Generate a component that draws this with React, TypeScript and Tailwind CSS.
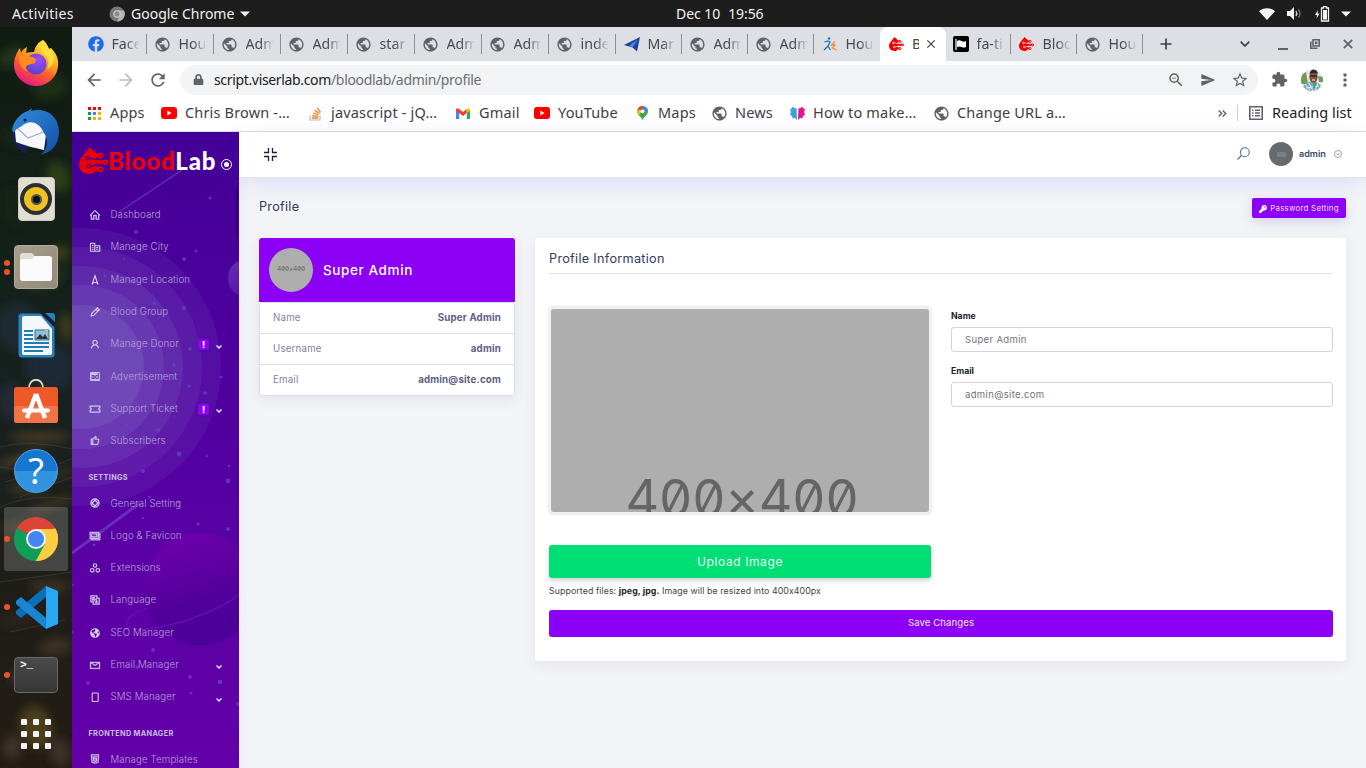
import type { ReactNode } from "react";
import { FaKey, FaFacebook, FaLock, FaGlobeAmericas } from "react-icons/fa";
import {
  MdArrowBack,
  MdArrowForward,
  MdRefresh,
  MdStarBorder,
  MdSend,
  MdMoreVert,
  MdClose,
  MdOutlineZoomOut,
  MdPublic,
  MdExtension,
} from "react-icons/md";
import {
  LiaHomeSolid,
  LiaUser,
  LiaTicketAltSolid,
  LiaThumbsUp,
  LiaLifeRing,
  LiaImages,
  LiaEnvelope,
  LiaHtml5,
  LiaLanguageSolid,
} from "react-icons/lia";

/* ---------- small drawings ---------- */

function YouTube() {
  return (
    <svg width="16" height="12" viewBox="0 0 16 12">
      <rect width="16" height="12" rx="3" fill="#f00" />
      <path d="M6.3 3.6v4.8L10.5 6z" fill="#fff" />
    </svg>
  );
}

function BloodDrop({ className, bg }: { className: string; bg: string }) {
  return (
    <svg className={className} viewBox="0 0 29 27">
      <path d="M10.500 0c1.500 2 5 4 7.500 7l-2 5v11l-1 3c-1.500.7-3 1-4.500 1C4.500 27 0 23 0 17.500 0 11 7.500 5 10.500 0z" fill="#ee0000" />
      <path d="M12 8.500h9M9 15h17M12 22.500h9M14 12l5 2M14 19l4 2" stroke="#ee0000" strokeWidth="3.600" />
      <path d="M20 12.300h-6l-1.500-1H9M19 18.600h-4l-1.500.6H11" stroke={bg} strokeWidth="1.300" fill="none" />
      <g fill={bg} stroke="#ee0000" strokeWidth="1.900">
        <circle cx="21.500" cy="8.500" r="2" />
        <circle cx="26.500" cy="15.300" r="1.800" />
        <circle cx="21.500" cy="22.300" r="2" />
      </g>
      <g fill="#ee0000" stroke={bg} strokeWidth="1.200">
        <circle cx="8.500" cy="11.300" r="1.700" />
        <circle cx="10" cy="19.200" r="1.700" />
      </g>
    </svg>
  );
}

/* ---------- desktop ---------- */

function TopPanel() {
  return (
    <header className="flex h-[27px] shrink-0 items-center bg-[#1d1d1d] pl-3 text-[14px] text-[#f2f2f2]">
      <span className="w-[97px] tracking-[0.350px]">Activities</span>
      <svg width="16" height="16" viewBox="0 0 16 16">
        <circle cx="8" cy="8" r="7.500" fill="#777" />
        <path d="M8 4.500h7A7.500 7.500 0 0 1 8 15.500l3-6z" fill="#b5b5b5" />
        <circle cx="8" cy="8" r="3.300" fill="#8a8a8a" stroke="#ddd" strokeWidth="1" />
      </svg>
      <span className="ml-[6px] w-[105px] whitespace-nowrap">Google Chrome</span>
      <svg className="ml-[4px]" width="10" height="6" viewBox="0 0 10 6">
        <path d="M0 .5h10L5 5.500z" fill="#f2f2f2" />
      </svg>
      <span className="ml-[426px] tracking-[-0.050px]">Dec 10</span>
      <span className="ml-[8px] tracking-[-0.100px]">19:56</span>
      <div className="ml-auto flex items-center pr-[15px]">
        <svg width="16" height="12" viewBox="0 0 16 12">
          <path d="M0 3.200C4.500-.8 11.500-.8 16 3.200L8 12z" fill="#f2f2f2" />
        </svg>
        <svg className="ml-[12px]" width="16" height="13" viewBox="0 0 16 13">
          <path d="M0 4h3l4-4v13L3 9H0z" fill="#f2f2f2" />
          <path d="M9 4q1.500 2.500 0 5" stroke="#ddd" strokeWidth="1.300" fill="none" />
          <path d="M11.500 2.500q3 4 0 8" stroke="#777" strokeWidth="1.300" fill="none" />
        </svg>
        <svg className="ml-[12px]" width="15" height="16" viewBox="0 0 15 16">
          <path d="M3 4L0 9h2l-.5 3.500L4.500 7.500h-2z" fill="#f2f2f2" />
          <path d="M6.500 2h2V.7h3V2h2v13h-7z" fill="none" stroke="#f2f2f2" strokeWidth="1.300" />
          <path d="M8 4h4v9.500H8z" fill="#f2f2f2" />
        </svg>
        <svg className="ml-[11px]" width="10" height="6" viewBox="0 0 10 6">
          <path d="M0 .5h10L5 5.500z" fill="#f2f2f2" />
        </svg>
      </div>
    </header>
  );
}

function DockItem({ dots = 0, active = false, children }: { dots?: number; active?: boolean; children: ReactNode }) {
  return (
    <div className="relative flex h-[68px] items-center justify-center">
      {active && <div className="absolute inset-x-1 inset-y-[2px] rounded-[3px] bg-[#ffffff2e]" />}
      {dots > 0 && (
        <div className="absolute top-0 left-1 flex h-full flex-col justify-center gap-[3px]">
          {Array.from({ length: dots }, (_, i) => (
            <div key={i} className="size-[6px] rounded-full bg-[#e95420]" />
          ))}
        </div>
      )}
      <div className="relative">{children}</div>
    </div>
  );
}

const leaves = [
  [12, 30, 16, 9, "#24351a"], [50, 60, 18, 12, "#1c2d17"], [20, 110, 20, 10, "#182817"], [58, 150, 12, 16, "#2c3d18"],
  [15, 180, 14, 20, "#152213"], [60, 226, 9, 7, "#3f4516"], [44, 250, 20, 12, "#22321f"], [18, 300, 22, 24, "#1c2a33"],
  [50, 340, 24, 24, "#1e2a34"], [14, 375, 16, 18, "#222c34"], [66, 300, 6, 14, "#40411b"], [40, 410, 30, 5, "#4b3a26"],
  [20, 432, 25, 3, "#5a4830"], [55, 447, 22, 3, "#3e3120"], [28, 462, 20, 2, "#6b553b"], [50, 478, 24, 3, "#4c3c28"],
  [18, 500, 20, 6, "#352a1c"], [50, 560, 20, 6, "#3f3122"], [20, 590, 22, 8, "#2c241b"], [55, 620, 16, 9, "#3b3023"],
  [30, 650, 20, 8, "#40342a"], [36, 700, 16, 22, "#4a3c1f"], [60, 725, 10, 14, "#3c3129"], [12, 720, 9, 12, "#40362c"],
] as const;

function Dock() {
  return (
    <aside className="relative w-[72px] shrink-0 overflow-hidden bg-linear-to-b from-[#101c11] via-[#17211f] to-[#241b14] pt-[2px]">
      <svg className="absolute inset-0" width="72" height="741" viewBox="0 0 72 741">
        <defs>
          <filter id="soft" x="-50%" y="-50%" width="200%" height="200%">
            <feGaussianBlur stdDeviation="5" />
          </filter>
        </defs>
        <g filter="url(#soft)">
          {leaves.map(([cx, cy, rx, ry, fill], i) => (
            <ellipse key={i} cx={cx} cy={cy} rx={rx} ry={ry} fill={fill} transform={`rotate(${-18 + (i % 3) * 9} ${cx} ${cy})`} />
          ))}
        </g>
        <g stroke="#7a6448" strokeOpacity=".3" fill="none">
          <path d="M0 420q30-8 72 2M0 440q35 8 72-8M5 455l50-14M20 470l52-20M0 480q30-14 72-8M0 555l72-10M10 605l55-12" />
        </g>
      </svg>
      <DockItem>
        <svg width="46" height="48" viewBox="0 0 46 48">
          <defs>
            <linearGradient id="ffBody" x1=".8" y1="0" x2=".3" y2="1">
              <stop offset="0" stopColor="#fff44f" />
              <stop offset=".35" stopColor="#ffb21f" />
              <stop offset=".65" stopColor="#ff5a2c" />
              <stop offset="1" stopColor="#e31587" />
            </linearGradient>
            <radialGradient id="ffGlobe" cx=".6" cy=".3" r=".8">
              <stop offset="0" stopColor="#a04bf5" />
              <stop offset="1" stopColor="#4b43c9" />
            </radialGradient>
          </defs>
          <path d="M30 1c3 2 5 6 6 9 1-1 2-1 2-1 5 5 8 11 7 18-1 12-11 20-22 20S1 38 1 26C1 19 4 13 7 9l1 5c1-3 4-5 6-6l-1 6c3-1 6-1 8-1 1-5 4-10 9-12z" fill="url(#ffBody)" />
          <circle cx="23" cy="25" r="10.500" fill="url(#ffGlobe)" />
          <path d="M6 18c5-3 12-1 17 2l-1 4-7 2c-3 1-3 4 0 7-6-2-9-8-9-15z" fill="#ff8b1f" />
          <path d="M30 1c-5 8-2 12 2 15s5 9 2 14c6-3 8-9 6-15-1-4-8-7-10-14z" fill="#ffdf3d" />
        </svg>
      </DockItem>
      <DockItem>
        <svg width="50" height="50" viewBox="0 0 50 50">
          <defs>
            <linearGradient id="tb" x1="0" y1="0" x2="1" y2="1">
              <stop offset="0" stopColor="#2f8fe0" />
              <stop offset="1" stopColor="#134da6" />
            </linearGradient>
          </defs>
          <path d="M2 22c-2 14 6 23 14 26l-1-6 20-2 12-20L30 5z" fill="#15205c" />
          <path d="M4 25l3-8 18-3 11 7-3 23C24 42 12 39 5 36z" fill="#f5f7fa" />
          <path d="M6 22l11 10 18-7" fill="none" stroke="#a9afb9" strokeWidth="1.200" />
          <path d="M1 24C2 15 10 7 17 5c3-2 4-3 4-3l-1 3C36 1 48 11 48 26c0 10-5 17-11 20l-7 3c7-7 8-15 3-22C28 15 18 14 12 19c-4 4-7 2-9 8z" fill="url(#tb)" />
          <circle cx="14" cy="14" r="1.500" fill="#1e1e1e" />
        </svg>
      </DockItem>
      <DockItem>
        <div className="flex h-[44px] w-[37px] items-center justify-center rounded-[4px] border border-[#cdc8bb] bg-[#e2ded2]">
          <div className="flex size-[32px] items-center justify-center rounded-full border-4 border-[#2a2f36] bg-[#f0c21e]">
            <div className="size-[11px] rounded-full border-2 border-[#50565c] bg-[#111]" />
          </div>
        </div>
      </DockItem>
      <DockItem dots={2}>
        <div className="flex size-[44px] items-center justify-center rounded-[4px] border border-[#b3aa9a] bg-linear-to-br from-[#a59d8d] to-[#948b7a]">
          <svg width="32" height="28" viewBox="0 0 32 28">
            <path d="M0 3q0-3 3-3h9l3 3.500h14q3 0 3 3V25q0 3-3 3H3q-3 0-3-3z" fill="#e1ddd6" />
            <path d="M0 9q0-3 3-3h9l3-3h14q3 0 3 3v19q0 3-3 3H3q-3 0-3-3z" fill="#fafafa" />
          </svg>
        </div>
      </DockItem>
      <DockItem>
        <svg width="37" height="45" viewBox="0 0 37 45">
          <rect x=".5" y=".5" width="36" height="44" rx="3" fill="#2684bd" />
          <path d="M22 0l15 15V8L29 0z" fill="#162130" />
          <path d="M27 0h7q3 0 3 3v6z" fill="#2684bd" />
          <path d="M4 5q0-2 2-2h17l11 13v24q0 2-2 2H6q-2 0-2-2z" fill="#f4f8fb" />
          <path d="M6 18h9M6 22h9M6 26h9M6 30h25M6 34h25M6 38h19" stroke="#1d7cb5" strokeWidth="1.800" />
          <path d="M17 17h14v10H17z" fill="#8fc0df" stroke="#1c6fa2" />
          <path d="M18 26l4-5 3 3 2-3 3 5z" fill="#333" />
          <path d="M26 17h4v3z" fill="#f3b62c" />
        </svg>
      </DockItem>
      <DockItem>
        <svg className="-mt-[4px]" width="44" height="45" viewBox="0 0 44 45">
          <path d="M15 9c0-11 14-11 14 0" fill="none" stroke="#ecd9b4" strokeWidth="1.800" />
          <rect y="8" width="44" height="36" rx="3" fill="#ee5a27" />
          <rect y="27" width="44" height="17" rx="3" fill="#f27446" />
          <path d="M22 15L13 39M22 15l9 24" stroke="#fff" strokeWidth="4.500" fill="none" />
          <path d="M10 31.500h24" stroke="#fff" strokeWidth="4" strokeLinecap="round" />
        </svg>
      </DockItem>
      <DockItem>
        <div className="flex size-[44px] items-center justify-center rounded-full border border-[#50a6e6] bg-linear-to-b from-[#1577cf] from-50% to-[#3293de] to-50% text-[36px] leading-none text-white">
          ?
        </div>
      </DockItem>
      <DockItem dots={1} active>
        <svg width="44" height="44" viewBox="0 0 44 44">
          <path d="M22 22L2.950 11A22 22 0 0 1 41.050 11z" fill="#db4437" />
          <path d="M22 22L41.050 11A22 22 0 0 1 22 44z" fill="#ffcd40" />
          <path d="M2.950 11A22 22 0 0 0 22 44l9-17-9-5z" fill="#0f9d58" />
          <path d="M22 12h19.600A22 22 0 0 1 22 44l9.500-17z" fill="#ffcd40" />
          <circle cx="22" cy="22" r="10" fill="#f1f1f1" />
          <circle cx="22" cy="22" r="8" fill="#4285f4" />
        </svg>
      </DockItem>
      <DockItem dots={1}>
        <svg width="43" height="43" viewBox="0 0 43 43">
          <path d="M31 11L6 32l-5-4v-3L31 0z" fill="#0a6fb8" />
          <path d="M31 32L6 11l-5 4v3l30 25z" fill="#1787d4" />
          <path d="M31 0l12 5v33l-12 5z" fill="#2aa7f2" />
        </svg>
      </DockItem>
      <DockItem dots={1}>
        <div className="h-[36px] w-[44px] rounded-[4px] border border-[#686868] bg-linear-to-b from-[#4a4a4a] to-[#363636] pl-[5px] font-mono text-[11px] leading-[14px] font-bold text-white">
          &gt;_
        </div>
      </DockItem>
      <div className="relative mx-auto mt-[10px] grid w-[30px] grid-cols-3 gap-[6px]">
        {Array.from({ length: 9 }, (_, i) => (
          <div key={i} className="size-[6px] rounded-[1px] bg-[#f4f4f2]" />
        ))}
      </div>
    </aside>
  );
}

/* ---------- browser ---------- */

const plane = (
  <svg width="16" height="15" viewBox="0 0 16 15">
    <path d="M0 8L16 0l-3 14.500-4.500-4z" fill="#1e3f9e" />
    <path d="M14 2.500L5 8.500l3.500 2z" fill="#4c86dd" />
  </svg>
);
const runner = (
  <svg width="14" height="14" viewBox="0 0 14 14" fill="none" strokeWidth="1.300">
    <circle cx="6" cy="1.500" r="1.300" fill="#1d78c8" />
    <path d="M1.500 5l3.500-1 2 1-2 4-4 4M5 9l2.500 4" stroke="#1d78c8" />
    <path d="M12 4.500L8.500 8H12l-2.500 3 4 2" stroke="#f28c28" />
  </svg>
);
const flag = (
  <div className="flex size-4 items-center justify-center rounded-[2px] bg-black">
    <svg width="12" height="11" viewBox="0 0 12 11">
      <path d="M1 0v11" stroke="#fff" strokeWidth="1.200" />
      <path d="M2 2q2-1.500 4.500 0t4.500 0v6q-2 1-4.500 0T2 8z" fill="#fff" />
    </svg>
  </div>
);
const drop = <BloodDrop className="h-[14px] w-[15px]" bg="#fff" />;
const globe = <MdPublic className="size-[17px] shrink-0 text-[#5f6368]" />;

type TabInfo = { icon: ReactNode; text: string; width: string; active?: boolean; bare?: boolean };

const tabs: TabInfo[] = [
  { icon: <FaFacebook className="size-4 text-[#1b6cf2]" />, text: "Face", width: "w-[67px]" },
  { icon: globe, text: "Hou", width: "w-[67px]" },
  { icon: globe, text: "Adm", width: "w-[67px]" },
  { icon: globe, text: "Adm", width: "w-[67px]" },
  { icon: globe, text: "star", width: "w-[67px]" },
  { icon: globe, text: "Adm", width: "w-[67px]" },
  { icon: globe, text: "Adm", width: "w-[67px]" },
  { icon: globe, text: "inde", width: "w-[67px]" },
  { icon: plane, text: "Mar", width: "w-[66px]" },
  { icon: globe, text: "Adm", width: "w-[66px]" },
  { icon: globe, text: "Adm", width: "w-[66px]" },
  { icon: runner, text: "Hou", width: "w-[65px]", bare: true },
  { icon: drop, text: "B", width: "w-[66px]", active: true },
  { icon: flag, text: "fa-ti", width: "w-[66px]" },
  { icon: drop, text: "Bloo", width: "w-[66px]" },
  { icon: globe, text: "Hou", width: "w-[66px]" },
];

function Tab({ icon, text, width, active, bare }: TabInfo) {
  if (active) {
    return (
      <div className={`flex items-center rounded-t-[8px] bg-white pl-[8px] ${width}`}>
        <div className="flex w-4 justify-center">{icon}</div>
        <span className="ml-[8px] w-[7px] overflow-hidden">{text}</span>
        <MdClose className="ml-[5px] size-[14px] text-[#3c4043]" />
      </div>
    );
  }
  return (
    <div className={`flex items-center pl-[6.500px] ${width}`}>
      <div className="flex w-4 shrink-0 justify-center">{icon}</div>
      <span className="ml-[8px] w-[28px] overflow-hidden mask-r-from-50% whitespace-nowrap">{text}</span>
      <div className={bare ? "hidden" : "mr-px ml-auto h-5 w-px bg-[#8b8e93]"} />
    </div>
  );
}

function TabStrip() {
  return (
    <div className="flex h-[34px] shrink-0 bg-[#dedfe4] pl-[9px] text-[14.200px] text-[#45494d]">
      {tabs.map((t, i) => (
        <Tab key={i} {...t} />
      ))}
      <div className="ml-[16px] flex grow items-center">
        <svg width="12" height="12" viewBox="0 0 13 13">
          <path d="M6.500 .5v12M.5 6.500h12" stroke="#3c4043" strokeWidth="1.800" />
        </svg>
        <svg className="ml-[68px]" width="10" height="6" viewBox="0 0 10 6">
          <path d="M.7.700L5 5 9.300.700" stroke="#3c4043" strokeWidth="1.700" fill="none" />
        </svg>
        <div className="mt-[9px] ml-[28px] h-[2px] w-[10px] bg-[#5f6368]" />
        <svg className="ml-[22px]" width="10" height="10" viewBox="0 0 10 10">
          <path d="M3 .8h6.200V7H3zM.8 2.500v6.700H7.500" stroke="#5f6368" strokeWidth="1.600" fill="none" />
          <path d="M4.800 2.600h2.600v2.600H4.800z" fill="#5f6368" />
        </svg>
        <svg className="ml-[23px]" width="10" height="10" viewBox="0 0 10 10">
          <path d="M.8.800l8.400 8.400M9.200.800L.8 9.200" stroke="#5f6368" strokeWidth="1.800" />
        </svg>
      </div>
    </div>
  );
}

function Toolbar() {
  return (
    <div className="flex h-[37px] shrink-0 items-center pl-[12px] text-[#5f6368]">
      <MdArrowBack className="size-5" />
      <MdArrowForward className="ml-[12px] size-5 text-[#babcbe]" />
      <MdRefresh className="ml-[12px] size-5" />
      <div className="ml-[12px] flex h-[30px] w-[1078px] items-center rounded-full bg-[#f1f3f4] pl-[13px]">
        <FaLock className="size-[11px]" />
        <div className="ml-[10px] text-[14px] tracking-[-0.340px]">
          <span className="text-[#202124]">script.viserlab.com</span>
          <span className="text-[#6c7075]">/bloodlab/admin/profile</span>
        </div>
        <MdOutlineZoomOut className="ml-auto size-[18px]" />
        <MdSend className="ml-[15px] size-4" />
        <MdStarBorder className="mr-[9px] ml-[15px] size-[18px]" />
      </div>
      <MdExtension className="ml-[13px] size-[17px]" />
      <svg className="ml-[13px]" width="22" height="22" viewBox="0 0 22 22">
        <defs>
          <clipPath id="me">
            <circle cx="11" cy="11" r="11" />
          </clipPath>
        </defs>
        <g clipPath="url(#me)">
          <path fill="#e6e9e4" d="M0 0h22v22H0z" />
          <path fill="#6f9a58" d="M0 6l5-3 2 12H0zM17 7l5 1v5h-4z" />
          <path fill="#7fa8bd" d="M1 22q1-9 8-9h6q5 1 6 9z" />
          <path d="M4 15l5 6M8 14l4 8M17 14l-3 8M5 19l13-2" stroke="#e8f2f6" />
          <path d="M14 14l-1 5" stroke="#30a06a" strokeWidth="2" />
          <ellipse cx="12.500" cy="8" rx="4.200" ry="6" fill="#8a5238" />
          <path d="M8.500 5q1-5 4.500-4.500T17 5q-4-2-8.500 0z" fill="#2e2a2c" />
          <path d="M9 7h7" stroke="#30262b" strokeWidth="1.500" />
          <path d="M11 11h3" stroke="#eee" />
        </g>
      </svg>
      <MdMoreVert className="ml-[12px] size-[20px]" />
    </div>
  );
}

const appColors = ["bg-[#f00]", "bg-[#f00]", "bg-[#f00]", "bg-[#0c9d58]", "bg-[#4285f4]", "bg-[#f4b400]", "bg-[#0c9d58]", "bg-[#f4b400]", "bg-[#f4b400]"];

const bookmarks: { text: string; width: string; icon: ReactNode }[] = [
  {
    text: "Apps",
    width: "w-[75px]",
    icon: (
      <div className="grid grid-cols-3 gap-[2px]">
        {appColors.map((c, i) => (
          <div key={i} className={`size-[3px] ${c}`} />
        ))}
      </div>
    ),
  },
  { text: "Chris Brown -…", width: "w-[146px]", icon: <YouTube /> },
  {
    text: "javascript - jQ…",
    width: "w-[148px]",
    icon: (
      <svg width="13" height="15" viewBox="0 0 13 15" fill="none">
        <path d="M1 9.500V14h10V9.500" stroke="#b5b7ba" strokeWidth="1.200" />
        <path d="M3 12h6M3.200 9.700l6 .6M4 7l5.700 1.700M5.500 4.200l5 3.200M8 1.700l3.700 4.600" stroke="#f48024" strokeWidth="1.300" />
      </svg>
    ),
  },
  {
    text: "Gmail",
    width: "w-[79px]",
    icon: (
      <svg width="14" height="11" viewBox="0 0 14 11">
        <path d="M0 2v9h3.200V4.500z" fill="#4285f4" />
        <path d="M14 2v9h-3.200V4.500z" fill="#34a853" />
        <path d="M0 2q0-3 3.200-1L7 4l3.800-3V5L7 8 0 3z" fill="#ea4335" />
        <path d="M10.800 1Q14-1 14 2v.8L10.800 5z" fill="#fbbc04" />
      </svg>
    ),
  },
  { text: "YouTube", width: "w-[100px]", icon: <YouTube /> },
  {
    text: "Maps",
    width: "w-[77px]",
    icon: (
      <svg width="11" height="15" viewBox="0 0 11 15">
        <path d="M5.500 15C5.500 11 0 9.500 0 5.500A5.500 5.500 0 0 1 11 5.500C11 9.500 5.500 11 5.500 15z" fill="#34a853" />
        <path d="M1 2.500A5.500 5.500 0 0 1 7.200.300L3 6z" fill="#ea4335" />
        <path d="M7.200.300A5.500 5.500 0 0 1 11 5.500L5 4z" fill="#4285f4" />
        <path d="M0 5.500q0 2 1.500 4l4-4-3-2z" fill="#fbbc04" />
        <circle cx="5.500" cy="5.300" r="1.900" fill="#fff" />
      </svg>
    ),
  },
  { text: "News", width: "w-[78px]", icon: globe },
  {
    text: "How to make…",
    width: "w-[144px]",
    icon: (
      <svg width="15" height="15" viewBox="0 0 16 15">
        <path d="M0 3l2-1 1-2 2 2 2 0 .5 12.500L5 12l-2 1-1-3-2-1 1-3z" fill="#3ba2dc" />
        <path d="M16 3l-2-1-1-2-2 2-2 0-.5 12.500L11 12l2 1 1-3 2-1-1-3z" fill="#e8158a" />
      </svg>
    ),
  },
  { text: "Change URL a…", width: "w-[132px]", icon: globe },
];

function BookmarksBar() {
  return (
    <div className="flex h-[34px] shrink-0 items-center border-b border-[#dadce0] pb-[3px] pl-[14px] text-[14.500px] tracking-[0.170px] text-[#3c4043]">
      {bookmarks.map((b, i) => (
        <div key={i} className={`flex shrink-0 items-center ${b.width}`}>
          <div className="flex w-4 shrink-0 justify-center">{b.icon}</div>
          <span className="ml-[8px] whitespace-nowrap">{b.text}</span>
        </div>
      ))}
      <div className="flex grow items-center justify-end pr-[14px]">
        <svg width="9" height="7" viewBox="0 0 9 7">
          <path d="M.7.500l3 3-3 3M4.700.500l3 3-3 3" stroke="#5f6368" strokeWidth="1.400" fill="none" />
        </svg>
        <div className="ml-[10px] h-4 w-px bg-[#c9cbcf]" />
        <svg className="ml-[11px]" width="14" height="14" viewBox="0 0 14 14">
          <path d="M.8.800h12.400v12.400H.8z" stroke="#5f6368" strokeWidth="1.600" fill="none" />
          <path d="M3 4.200h1.500M3 7h1.500M3 9.800h1.500M6 4.200h5M6 7h5M6 9.800h5" stroke="#5f6368" strokeWidth="1.500" />
        </svg>
        <span className="ml-[9px] w-[80px] tracking-[0.050px] whitespace-nowrap text-[#202124]">Reading list</span>
      </div>
    </div>
  );
}

/* ---------- admin sidebar ---------- */

const stars = [
  [64, 100, 2], [52, 127, 1], [112, 127, 2], [124, 119, 1.5], [138, 66, 1.5], [33, 144, 1.5], [82, 171, 1.8], [112, 176, 2],
  [34, 160, 1], [118, 217, 1.8], [102, 233, 1.8], [133, 261, 1.8], [149, 245, 1.6], [117, 254, 1.5], [86, 298, 2], [55, 292, 1.5],
  [107, 322, 2.4], [135, 324, 1.2], [71, 339, 2], [157, 334, 1.2], [156, 349, 2.4], [77, 365, 1.5], [106, 370, 1.8], [71, 386, 1.3],
  [126, 392, 1.8], [156, 397, 2], [22, 413, 1.5], [81, 518, 1.9], [65, 535, 1.9], [118, 545, 1.9], [148, 550, 2.3], [16, 551, 1.9],
  [119, 561, 1.5], [166, 572, 2], [1, 453, 1], [0, 500, 1.5],
] as const;

function SidebarArt() {
  return (
    <svg className="absolute inset-0" width="167" height="636" viewBox="0 0 167 636">
      <defs>
        <linearGradient id="planet" x1=".3" y1="0" x2=".6" y2="1">
          <stop offset="0" stopColor="#6e00ac" />
          <stop offset=".6" stopColor="#52009b" />
          <stop offset="1" stopColor="#4a0096" />
        </linearGradient>
        <linearGradient id="moon" x1="0" y1="0" x2="1" y2="1">
          <stop offset="0" stopColor="#6733b4" />
          <stop offset="1" stopColor="#4b009c" />
        </linearGradient>
      </defs>
      <g fill="#8e86cf">
        <circle cx="10" cy="235" r="139" fillOpacity=".1" />
        <circle cx="10" cy="235" r="120" fillOpacity=".11" />
        <circle cx="10" cy="235" r="101" fillOpacity=".14" />
        <circle cx="10" cy="235" r="82" fillOpacity=".17" />
        <circle cx="10" cy="235" r="62" fillOpacity=".2" />
      </g>
      <path d="M47 80L110 38" stroke="#6c3fb8" strokeWidth="1.200" strokeOpacity=".8" />
      <path d="M0 421L68 371" stroke="#6f35bd" strokeWidth="3" strokeOpacity=".85" />
      <circle cx="175" cy="146" r="19" fill="url(#moon)" />
      <circle cx="128" cy="457" r="56" fill="url(#planet)" />
      <path d="M75 476C48 486 47 500 75 497c30-3 70-18 92-34" fill="none" stroke="#6414b0" strokeWidth="1.300" />
      {stars.map(([x, y, r], i) => (
        <circle key={i} cx={x} cy={y} r={r} fill="#5f4cc4" fillOpacity=".7" />
      ))}
    </svg>
  );
}

const line = { fill: "none", stroke: "currentColor", strokeWidth: 1.1 };

const navIcons = {
  city: (
    <svg width="12" height="12" viewBox="0 0 12 12" {...line}>
      <path d="M1.500 10.200V2.300h4.300v7.900M1 10.200h10.200M5.800 4.700h5v5.500M3 4.400h1.400M3 6.300h1.400M3 8.200h1.400M7.300 6.500h2M7.300 8.300h2" />
    </svg>
  ),
  arrow: (
    <svg width="12" height="12" viewBox="0 0 12 12" {...line}>
      <path d="M6 1.800l3 8.700-1.500-2h-3l-1.500 2z" />
    </svg>
  ),
  pen: (
    <svg width="12" height="12" viewBox="0 0 12 12" {...line}>
      <path d="M2.200 10l.7-2.700 5.500-5.500 1.900 1.900L4.800 9.300zM7 3.200l1.900 1.900" />
    </svg>
  ),
  ad: (
    <span className="flex h-[9px] w-[10px] items-center justify-center rounded-[1px] bg-[#c9bde4]">
      <span className="text-[7px] leading-[7px] font-bold tracking-[-0.300px] text-[#5c37ab]">ad</span>
    </span>
  ),
  cubes: (
    <svg width="12" height="12" viewBox="0 0 12 12" {...line}>
      <circle cx="6" cy="3.400" r="1.700" />
      <circle cx="3.200" cy="8.300" r="1.800" />
      <circle cx="8.800" cy="8.300" r="1.800" />
    </svg>
  ),
  phone: (
    <svg width="12" height="12" viewBox="0 0 12 12" {...line}>
      <rect x="3.200" y="2" width="6" height="8.500" rx=".8" />
    </svg>
  ),
};

type NavEntry = { text: string; icon: ReactNode; alert?: boolean; caret?: boolean };

const mainNav: NavEntry[] = [
  { text: "Dashboard", icon: <LiaHomeSolid className="stroke-1" /> },
  { text: "Manage City", icon: navIcons.city },
  { text: "Manage Location", icon: navIcons.arrow },
  { text: "Blood Group", icon: navIcons.pen },
  { text: "Manage Donor", icon: <LiaUser className="stroke-1" />, alert: true, caret: true },
  { text: "Advertisement", icon: navIcons.ad },
  { text: "Support Ticket", icon: <LiaTicketAltSolid className="stroke-1" />, alert: true, caret: true },
  { text: "Subscribers", icon: <LiaThumbsUp className="stroke-1" /> },
];
const settingsNav: NavEntry[] = [
  { text: "General Setting", icon: <LiaLifeRing className="stroke-1" /> },
  { text: "Logo & Favicon", icon: <LiaImages className="stroke-1" /> },
  { text: "Extensions", icon: navIcons.cubes },
  { text: "Language", icon: <LiaLanguageSolid className="stroke-1" /> },
  { text: "SEO Manager", icon: <FaGlobeAmericas className="size-[10px]" /> },
  { text: "Email Manager", icon: <LiaEnvelope className="stroke-1" />, caret: true },
  { text: "SMS Manager", icon: navIcons.phone, caret: true },
];

function NavItem({ text, icon, alert, caret }: NavEntry) {
  return (
    <li className="flex h-[32.300px] items-center pl-[17px] text-[#b6a2d8]">
      <span className="flex w-3 justify-center pb-px text-[12px] text-[#d8cfec]">{icon}</span>
      <span className="ml-[9.500px] text-[9.700px] font-light tracking-[0.120px] whitespace-nowrap">{text}</span>
      <span className="ml-auto flex items-center pr-[17px]">
        {alert && (
          <span className="mr-[7px] flex size-[11px] items-center justify-center rounded-[2px] bg-[#8c00f7] text-[9px] leading-none font-extrabold text-white shadow">
            !
          </span>
        )}
        {caret && (
          <svg className="mt-[4px]" width="6" height="4" viewBox="0 0 6 4">
            <path d="M.5.500L3 3 5.500.500" stroke="#e6def4" strokeWidth="1.500" fill="none" />
          </svg>
        )}
      </span>
    </li>
  );
}

function NavHeader({ text }: { text: string }) {
  return (
    <li className="flex h-[30px] items-end pb-[4px] pl-[16.500px] text-[7.300px] leading-[12px] font-bold tracking-[0.330px] text-[#c9bbe2]">
      {text}
    </li>
  );
}

function Sidebar() {
  return (
    <nav className="relative w-[167px] shrink-0 overflow-hidden bg-linear-to-b from-[#430096] via-[#5400a2] to-[#6300a9]">
      <SidebarArt />
      <div className="relative flex h-[67.300px] items-start pt-[15px] pl-[7px]">
        <BloodDrop className="h-[27px] w-[29px] shrink-0" bg="#430096" />
        <span className="mt-px w-[110px] shrink-0 font-[Lato,sans-serif] text-[24px] leading-[26px] font-black tracking-[0.850px] whitespace-nowrap text-white">
          <span className="text-[#ee0000]">Blood</span>Lab
        </span>
        <span className="mt-[12px] ml-[3px] flex size-[11px] shrink-0 items-center justify-center rounded-full border border-white">
          <span className="size-[5px] rounded-full bg-white" />
        </span>
      </div>
      <ul className="relative">
        {mainNav.map((n) => (
          <NavItem key={n.text} {...n} />
        ))}
        <NavHeader text="SETTINGS" />
        {settingsNav.map((n) => (
          <NavItem key={n.text} {...n} />
        ))}
        <NavHeader text="FRONTEND MANAGER" />
        <NavItem text="Manage Templates" icon={<LiaHtml5 className="stroke-1" />} />
      </ul>
      <div className="absolute top-[56px] right-px h-[48px] w-[2px] bg-[#32007a]" />
    </nav>
  );
}

/* ---------- admin page ---------- */

function PageBar() {
  return (
    <div className="relative flex h-[46px] shrink-0 items-center border-b border-[#dee2f0] bg-white pr-[24px] pb-px pl-[25px] shadow-[0_5px_24px_-3px_#4634ff26]">
      <svg width="13" height="13" viewBox="0 0 13 13">
        <path d="M4.500 0v4.500H0M8.500 0v4.500H13M4.500 13V8.500H0M8.500 13V8.500H13" stroke="#2b1a3c" strokeWidth="1.300" fill="none" />
      </svg>
      <svg className="-mt-[2px] ml-auto" width="13" height="13" viewBox="0 0 13 13">
        <circle cx="7.800" cy="5.200" r="4.500" stroke="#5b6e9a" strokeWidth="1.100" fill="none" />
        <path d="M4.500 8.500L.5 12.500" stroke="#5b6e9a" strokeWidth="1.200" />
      </svg>
      <div className="ml-[19px] flex size-6 items-center justify-center rounded-full bg-[#666b6e]">
        <div className="h-[5px] w-[9px] bg-[#7b8083]" />
      </div>
      <span className="ml-[6px] w-[27px] text-[9px] font-semibold text-[#34495e]">admin</span>
      <svg className="ml-[8px]" width="8" height="8" viewBox="0 0 8 8" fill="none" stroke="#7d86b0" strokeWidth=".8">
        <circle cx="4" cy="4" r="3.500" />
        <path d="M2.300 3.300L4 5l1.700-1.700" />
      </svg>
    </div>
  );
}

const summary = [
  ["Name", "Super Admin"],
  ["Username", "admin"],
  ["Email", "admin@site.com"],
];

function SummaryCard() {
  return (
    <div className="h-[158px] w-[256px] shrink-0 rounded-[4px] bg-white shadow-[0_4px_14px_#27305814]">
      <div className="flex h-[64px] items-center rounded-t-[3px] bg-[#8c00f5] pl-[10px]">
        <div className="flex size-[44px] items-center justify-center rounded-full bg-[#aeaeae] text-[6.500px] tracking-[-0.200px] text-[#666] [font-feature-settings:'zero','tnum']">
          400×400
        </div>
        <span className="mt-px ml-[10px] text-[13.500px] font-medium tracking-[0.600px] text-white">Super Admin</span>
      </div>
      <dl className="divide-y divide-[#dddfe2] rounded-[3px] border border-[#dddfe2]">
        {summary.map(([k, v]) => (
          <div key={k} className="flex h-[30px] items-center justify-between px-[13px] pt-px text-[9.700px] not-last:h-[31px]">
            <dt className="tracking-[0.200px] text-[#7f82a0]">{k}</dt>
            <dd className="font-bold tracking-[0.200px] text-[#5b6085]">{v}</dd>
          </div>
        ))}
      </dl>
    </div>
  );
}

function Field({ label, value }: { label: string; value: string }) {
  return (
    <label className="flex flex-col">
      <span className="text-[8.700px] leading-[12px] font-bold text-[#212529]">{label}</span>
      <span className="mt-[5.500px] flex h-[25px] items-center rounded-[3px] border border-[#ced4da] px-[13px] pt-px text-[9.500px] tracking-[0.350px] text-[#6c757d]">
        {value}
      </span>
    </label>
  );
}

function ProfileForm() {
  return (
    <section className="h-[423px] grow rounded-[3px] bg-white pr-[13px] pl-[14px] shadow-[0_4px_14px_#27305814]">
      <h2 className="flex h-[36px] items-center border-b border-[#dee2e6] pt-[6px] text-[12.700px] tracking-[0.280px] text-[#363b5e]">
        Profile Information
      </h2>
      <div className="flex gap-5">
        <div className="flex w-[382px] shrink-0 flex-col pt-[33px]">
          <div className="flex h-[207px] items-start justify-center overflow-hidden rounded-[5px] border-2 border-[#f1f1f1] bg-[#aeaeae] shadow-[0_0_3px_#00000033]">
            <span className="mt-[163px] ml-[4px] text-[52px] leading-[53px] tracking-[-0.400px] text-[#656565] [font-feature-settings:'zero','tnum']">
              400×400
            </span>
          </div>
          <div className="mt-[31px] flex h-[33px] items-center justify-center rounded-[3px] bg-[#00df75] text-[12px] tracking-[0.600px] text-[#e9fff4] shadow-[0_3px_5px_#0000002b]">
            Upload Image
          </div>
          <p className="mt-[6px] text-[8.800px] leading-[14px] tracking-[0.080px] whitespace-nowrap text-[#444] [font-feature-settings:'calt'_0]">
            Supported files: <b className="text-[#212529]">jpeg, jpg.</b> Image will be resized into 400x400px
          </p>
        </div>
        <div className="flex w-[382px] flex-col gap-[12.700px] pt-[35.600px]">
          <Field label="Name" value="Super Admin" />
          <Field label="Email" value="admin@site.com" />
        </div>
      </div>
      <button className="mt-[12px] flex h-[27px] w-full items-center justify-center rounded-[3px] bg-[#8c00f5] pb-px text-[9.600px] tracking-[0.080px] text-[#f0e0ff]">
        Save Changes
      </button>
    </section>
  );
}

function AdminPage() {
  return (
    <div className="flex grow flex-col bg-[#f3f4f7] font-[Inter,sans-serif]">
      <PageBar />
      <main className="grow bg-linear-to-r from-[#eceef2] to-transparent to-1% px-5 pt-[20px]">
        <div className="flex h-[20px] items-center justify-between">
          <h1 className="-mt-[3px] text-[12.700px] tracking-[0.260px] text-[#34395b]">Profile</h1>
          <button className="flex h-[20px] w-[94px] items-center justify-center gap-[3px] rounded-[2px] bg-[#8c00f5] pt-px text-[7.900px] tracking-[0.240px] whitespace-nowrap text-[#f0dfff] shadow-[0_4px_12px_#3c30a02b]">
            <FaKey className="size-2 text-white" />
            Password Setting
          </button>
        </div>
        <div className="mt-5 flex items-start gap-5">
          <SummaryCard />
          <ProfileForm />
        </div>
      </main>
    </div>
  );
}

export default function App() {
  return (
    <div className="flex h-[768px] w-[1366px] flex-col overflow-hidden font-[Noto_Sans,sans-serif]">
      <TopPanel />
      <div className="flex min-h-0 grow">
        <Dock />
        <div className="flex min-w-0 grow flex-col bg-white">
          <TabStrip />
          <Toolbar />
          <BookmarksBar />
          <div className="flex min-h-0 grow font-[Inter,sans-serif]">
            <Sidebar />
            <AdminPage />
          </div>
        </div>
      </div>
    </div>
  );
}
